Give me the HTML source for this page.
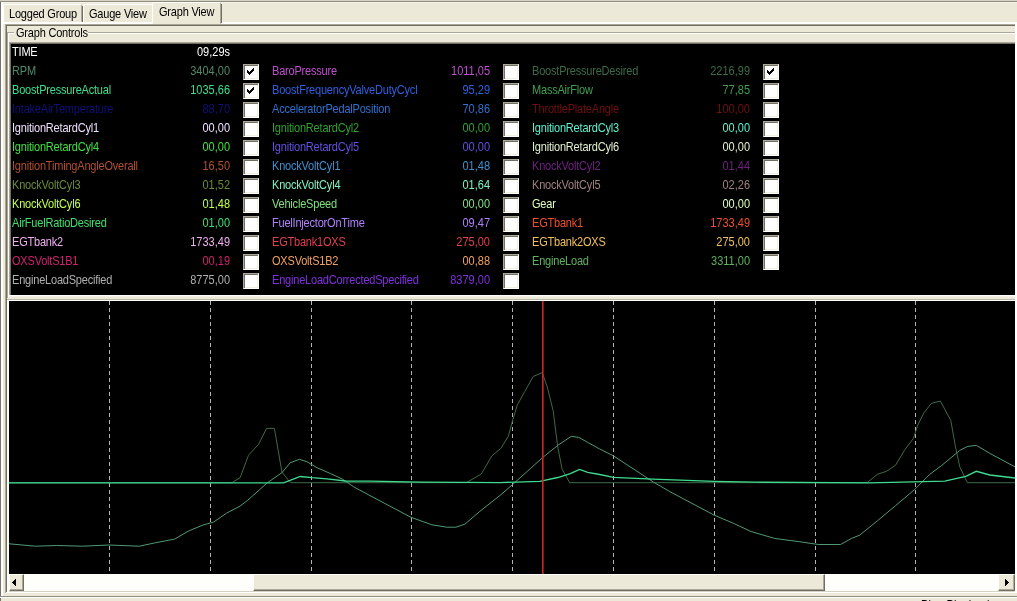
<!DOCTYPE html>
<html><head><meta charset="utf-8"><title>Graph View</title>
<style>
html,body{margin:0;padding:0}
body{width:1017px;height:601px;overflow:hidden;background:#ece9d8;position:relative;font-family:"Liberation Sans",sans-serif;font-size:11px;color:#000}
.a{position:absolute}
.t{position:absolute;white-space:nowrap;line-height:13px;height:13px;letter-spacing:-0.2px;transform:scaleY(1.13);transform-origin:0 10.3px;will-change:transform}
.v{position:absolute;white-space:nowrap;line-height:13px;height:13px;text-align:right;width:80px;letter-spacing:0;transform:scaleY(1.13);transform-origin:0 10.3px;will-change:transform}
.cb{position:absolute;width:14px;height:14px;background:#fff;border:1px solid;border-color:#aca899 #fff #fff #aca899;box-shadow:inset 1px 1px 0 #716f64, inset -1px -1px 0 #f1efe2}
.cb svg{position:absolute;left:3px;top:3px}
</style></head><body>

<div class="a" style="left:0;top:0;width:1017px;height:1px;background:#d6d3c4"></div>
<div class="a" style="left:0;top:1px;width:1017px;height:1px;background:#8f8c80"></div>
<div class="a" style="left:1px;top:2px;width:1016px;height:1px;background:#f6f4ea"></div>
<div class="a" style="left:0;top:2px;width:1px;height:599px;background:#77756a"></div>
<div class="a" style="left:1px;top:2px;width:2px;height:594px;background:#fff"></div>
<div class="a" style="left:3px;top:4px;width:79px;height:18px;border:1px solid;border-color:#fff #aca899 transparent #fff;box-sizing:border-box;border-radius:2px 2px 0 0"></div>
<div class="a" style="left:82px;top:6px;width:1px;height:16px;background:#716f64"></div>
<div class="a" style="left:83px;top:4px;width:71px;height:18px;border:1px solid;border-color:#fff #aca899 transparent #fff;box-sizing:border-box;border-radius:2px 2px 0 0"></div>
<div class="a" style="left:152px;top:2px;width:69px;height:22px;border:1px solid;border-color:#fff #aca899 transparent #fff;box-sizing:border-box;border-radius:2px 2px 0 0;background:#ece9d8"></div>
<div class="a" style="left:221px;top:4px;width:1px;height:19px;background:#716f64"></div>
<div class="a" style="left:3px;top:22px;width:149px;height:2px;background:#fff"></div>
<div class="a" style="left:222px;top:22px;width:795px;height:2px;background:#fff"></div>
<div class="t" style="left:9px;top:8px">Logged Group</div>
<div class="t" style="left:89px;top:8px">Gauge View</div>
<div class="t" style="left:159px;top:6px">Graph View</div>
<div class="a" style="left:5px;top:24px;width:1010px;height:1px;background:#aca899"></div>
<div class="a" style="left:6px;top:25px;width:1009px;height:1px;background:#716f64"></div>
<div class="a" style="left:5px;top:24px;width:1px;height:569px;background:#aca899"></div>
<div class="a" style="left:6px;top:25px;width:1px;height:568px;background:#716f64"></div>
<div class="a" style="left:1015px;top:24px;width:2px;height:569px;background:#fff"></div>
<div class="a" style="left:7px;top:32px;width:1008px;height:1px;background:#aca899"></div>
<div class="a" style="left:7px;top:33px;width:1008px;height:1px;background:#fff"></div>
<div class="a" style="left:7px;top:32px;width:1px;height:266px;background:#aca899"></div>
<div class="a" style="left:8px;top:33px;width:1px;height:265px;background:#fff"></div>
<div class="a" style="left:14px;top:30px;width:74px;height:6px;background:#ece9d8"></div><div class="t" style="left:16px;top:27px">Graph Controls</div>
<div class="a" style="left:9px;top:42px;width:1006px;height:253px;background:#000;border-top:1px solid #aca899;border-left:1px solid #aca899;box-sizing:border-box;box-shadow:inset 1px 1px 0 #716f64"></div>
<div class="a" style="left:9px;top:295px;width:1006px;height:1px;background:#fff"></div>
<div class="a" style="left:9px;top:296px;width:1006px;height:1px;background:#f4f2e6"></div>
<div class="a" style="left:7px;top:299px;width:1008px;height:1px;background:#bdbaa9"></div>
<div class="a" style="left:7px;top:300px;width:1008px;height:1px;background:#fff"></div>
<div class="t" style="left:12px;top:46px;color:#ffffff">TIME</div>
<div class="v" style="left:150px;top:46px;color:#ffffff">09,29s</div>
<div class="t" style="left:12px;top:65px;color:#52886a">RPM</div>
<div class="v" style="left:150px;top:65px;color:#52886a">3404,00</div>
<div class="cb" style="left:243px;top:64px"><svg width="7" height="7" viewBox="0 0 7 7" shape-rendering="crispEdges"><path d="M0 2h1v1h1v1h1v-1h1v-1h1v-1h1v-1h1v3h-1v1h-1v1h-1v1h-1v1h-1v-1h-1v-1h-1z" fill="#000"/></svg></div>
<div class="t" style="left:272px;top:65px;color:#c050d0">BaroPressure</div>
<div class="v" style="left:410px;top:65px;color:#c050d0">1011,05</div>
<div class="cb" style="left:503px;top:64px"></div>
<div class="t" style="left:532px;top:65px;color:#3f6b48">BoostPressureDesired</div>
<div class="v" style="left:670px;top:65px;color:#3f6b48">2216,99</div>
<div class="cb" style="left:763px;top:64px"><svg width="7" height="7" viewBox="0 0 7 7" shape-rendering="crispEdges"><path d="M0 2h1v1h1v1h1v-1h1v-1h1v-1h1v-1h1v3h-1v1h-1v1h-1v1h-1v1h-1v-1h-1v-1h-1z" fill="#000"/></svg></div>
<div class="t" style="left:12px;top:84px;color:#3ee08f">BoostPressureActual</div>
<div class="v" style="left:150px;top:84px;color:#3ee08f">1035,66</div>
<div class="cb" style="left:243px;top:83px"><svg width="7" height="7" viewBox="0 0 7 7" shape-rendering="crispEdges"><path d="M0 2h1v1h1v1h1v-1h1v-1h1v-1h1v-1h1v3h-1v1h-1v1h-1v1h-1v1h-1v-1h-1v-1h-1z" fill="#000"/></svg></div>
<div class="t" style="left:272px;top:84px;color:#3060e0">BoostFrequencyValveDutyCycl</div>
<div class="v" style="left:410px;top:84px;color:#3060e0">95,29</div>
<div class="cb" style="left:503px;top:83px"></div>
<div class="t" style="left:532px;top:84px;color:#40a050">MassAirFlow</div>
<div class="v" style="left:670px;top:84px;color:#40a050">77,85</div>
<div class="cb" style="left:763px;top:83px"></div>
<div class="t" style="left:12px;top:103px;color:#101078">IntakeAirTemperature</div>
<div class="v" style="left:150px;top:103px;color:#101078">88,70</div>
<div class="cb" style="left:243px;top:102px"></div>
<div class="t" style="left:272px;top:103px;color:#3070d0">AcceleratorPedalPosition</div>
<div class="v" style="left:410px;top:103px;color:#3070d0">70,86</div>
<div class="cb" style="left:503px;top:102px"></div>
<div class="t" style="left:532px;top:103px;color:#701010">ThrottlePlateAngle</div>
<div class="v" style="left:670px;top:103px;color:#701010">100,00</div>
<div class="cb" style="left:763px;top:102px"></div>
<div class="t" style="left:12px;top:122px;color:#f0e0ff">IgnitionRetardCyl1</div>
<div class="v" style="left:150px;top:122px;color:#f0e0ff">00,00</div>
<div class="cb" style="left:243px;top:121px"></div>
<div class="t" style="left:272px;top:122px;color:#30a030">IgnitionRetardCyl2</div>
<div class="v" style="left:410px;top:122px;color:#30a030">00,00</div>
<div class="cb" style="left:503px;top:121px"></div>
<div class="t" style="left:532px;top:122px;color:#60f0d0">IgnitionRetardCyl3</div>
<div class="v" style="left:670px;top:122px;color:#60f0d0">00,00</div>
<div class="cb" style="left:763px;top:121px"></div>
<div class="t" style="left:12px;top:141px;color:#40e040">IgnitionRetardCyl4</div>
<div class="v" style="left:150px;top:141px;color:#40e040">00,00</div>
<div class="cb" style="left:243px;top:140px"></div>
<div class="t" style="left:272px;top:141px;color:#6050e0">IgnitionRetardCyl5</div>
<div class="v" style="left:410px;top:141px;color:#6050e0">00,00</div>
<div class="cb" style="left:503px;top:140px"></div>
<div class="t" style="left:532px;top:141px;color:#e0f0d0">IgnitionRetardCyl6</div>
<div class="v" style="left:670px;top:141px;color:#e0f0d0">00,00</div>
<div class="cb" style="left:763px;top:140px"></div>
<div class="t" style="left:12px;top:160px;color:#b05030">IgnitionTimingAngleOverall</div>
<div class="v" style="left:150px;top:160px;color:#b05030">16,50</div>
<div class="cb" style="left:243px;top:159px"></div>
<div class="t" style="left:272px;top:160px;color:#4090d0">KnockVoltCyl1</div>
<div class="v" style="left:410px;top:160px;color:#4090d0">01,48</div>
<div class="cb" style="left:503px;top:159px"></div>
<div class="t" style="left:532px;top:160px;color:#702080">KnockVoltCyl2</div>
<div class="v" style="left:670px;top:160px;color:#702080">01,44</div>
<div class="cb" style="left:763px;top:159px"></div>
<div class="t" style="left:12px;top:179px;color:#6a8a3a">KnockVoltCyl3</div>
<div class="v" style="left:150px;top:179px;color:#6a8a3a">01,52</div>
<div class="cb" style="left:243px;top:178px"></div>
<div class="t" style="left:272px;top:179px;color:#80f0c0">KnockVoltCyl4</div>
<div class="v" style="left:410px;top:179px;color:#80f0c0">01,64</div>
<div class="cb" style="left:503px;top:178px"></div>
<div class="t" style="left:532px;top:179px;color:#a08080">KnockVoltCyl5</div>
<div class="v" style="left:670px;top:179px;color:#a08080">02,26</div>
<div class="cb" style="left:763px;top:178px"></div>
<div class="t" style="left:12px;top:198px;color:#c0ff50">KnockVoltCyl6</div>
<div class="v" style="left:150px;top:198px;color:#c0ff50">01,48</div>
<div class="cb" style="left:243px;top:197px"></div>
<div class="t" style="left:272px;top:198px;color:#80e080">VehicleSpeed</div>
<div class="v" style="left:410px;top:198px;color:#80e080">00,00</div>
<div class="cb" style="left:503px;top:197px"></div>
<div class="t" style="left:532px;top:198px;color:#e0ffc0">Gear</div>
<div class="v" style="left:670px;top:198px;color:#e0ffc0">00,00</div>
<div class="cb" style="left:763px;top:197px"></div>
<div class="t" style="left:12px;top:217px;color:#40e070">AirFuelRatioDesired</div>
<div class="v" style="left:150px;top:217px;color:#40e070">01,00</div>
<div class="cb" style="left:243px;top:216px"></div>
<div class="t" style="left:272px;top:217px;color:#b080ff">FuelInjectorOnTime</div>
<div class="v" style="left:410px;top:217px;color:#b080ff">09,47</div>
<div class="cb" style="left:503px;top:216px"></div>
<div class="t" style="left:532px;top:217px;color:#f05030">EGTbank1</div>
<div class="v" style="left:670px;top:217px;color:#f05030">1733,49</div>
<div class="cb" style="left:763px;top:216px"></div>
<div class="t" style="left:12px;top:236px;color:#f0b0f0">EGTbank2</div>
<div class="v" style="left:150px;top:236px;color:#f0b0f0">1733,49</div>
<div class="cb" style="left:243px;top:235px"></div>
<div class="t" style="left:272px;top:236px;color:#e04050">EGTbank1OXS</div>
<div class="v" style="left:410px;top:236px;color:#e04050">275,00</div>
<div class="cb" style="left:503px;top:235px"></div>
<div class="t" style="left:532px;top:236px;color:#f0c060">EGTbank2OXS</div>
<div class="v" style="left:670px;top:236px;color:#f0c060">275,00</div>
<div class="cb" style="left:763px;top:235px"></div>
<div class="t" style="left:12px;top:255px;color:#d02070">OXSVoltS1B1</div>
<div class="v" style="left:150px;top:255px;color:#d02070">00,19</div>
<div class="cb" style="left:243px;top:254px"></div>
<div class="t" style="left:272px;top:255px;color:#f0a060">OXSVoltS1B2</div>
<div class="v" style="left:410px;top:255px;color:#f0a060">00,88</div>
<div class="cb" style="left:503px;top:254px"></div>
<div class="t" style="left:532px;top:255px;color:#60b060">EngineLoad</div>
<div class="v" style="left:670px;top:255px;color:#60b060">3311,00</div>
<div class="cb" style="left:763px;top:254px"></div>
<div class="t" style="left:12px;top:274px;color:#b0b0b0">EngineLoadSpecified</div>
<div class="v" style="left:150px;top:274px;color:#b0b0b0">8775,00</div>
<div class="cb" style="left:243px;top:273px"></div>
<div class="t" style="left:272px;top:274px;color:#8030e0">EngineLoadCorrectedSpecified</div>
<div class="v" style="left:410px;top:274px;color:#8030e0">8379,00</div>
<div class="cb" style="left:503px;top:273px"></div>
<div class="cb" style="left:503px;top:273px"></div>
<div class="a" style="left:7px;top:300px;width:2px;height:293px;background:#fdfcf7"></div>
<div class="a" style="left:9px;top:301px;width:1006px;height:273px;background:#000"></div>
<svg class="a" style="left:0;top:0" width="1017" height="601" viewBox="0 0 1017 601">
<line x1="109.5" y1="301" x2="109.5" y2="572" stroke="#b4b4b4" stroke-width="1" stroke-dasharray="4 3" shape-rendering="crispEdges"/>
<line x1="210.5" y1="301" x2="210.5" y2="572" stroke="#b4b4b4" stroke-width="1" stroke-dasharray="4 3" shape-rendering="crispEdges"/>
<line x1="311.5" y1="301" x2="311.5" y2="572" stroke="#b4b4b4" stroke-width="1" stroke-dasharray="4 3" shape-rendering="crispEdges"/>
<line x1="411.5" y1="301" x2="411.5" y2="572" stroke="#b4b4b4" stroke-width="1" stroke-dasharray="4 3" shape-rendering="crispEdges"/>
<line x1="512.5" y1="301" x2="512.5" y2="572" stroke="#b4b4b4" stroke-width="1" stroke-dasharray="4 3" shape-rendering="crispEdges"/>
<line x1="613.5" y1="301" x2="613.5" y2="572" stroke="#b4b4b4" stroke-width="1" stroke-dasharray="4 3" shape-rendering="crispEdges"/>
<line x1="714.5" y1="301" x2="714.5" y2="572" stroke="#b4b4b4" stroke-width="1" stroke-dasharray="4 3" shape-rendering="crispEdges"/>
<line x1="815.5" y1="301" x2="815.5" y2="572" stroke="#b4b4b4" stroke-width="1" stroke-dasharray="4 3" shape-rendering="crispEdges"/>
<line x1="915.5" y1="301" x2="915.5" y2="572" stroke="#b4b4b4" stroke-width="1" stroke-dasharray="4 3" shape-rendering="crispEdges"/>
<polyline points="9.0,482.7 231.8,482.7 240.1,477.7 248.5,455.2 258.5,444.3 266.6,428.4 274.4,428.4 281.9,471.9 290.3,482.7 466.4,482.7 481.4,473.9 491.8,455.9 500.8,448.4 508.3,436.4 512.8,419.9 517.3,404.9 524.8,391.5 533.2,376.5 542.2,372.6 547.3,387.0 553.2,410.9 557.7,446.9 562.2,469.4 569.7,482.7 867.0,482.7 877.4,474.3 886.4,471.3 895.4,465.4 904.4,450.4 913.4,438.4 917.9,424.9 923.9,412.9 931.3,403.4 940.3,401.0 950.8,420.4 955.3,445.9 959.8,466.9 967.3,482.7 1015.0,482.7" fill="none" stroke="#3e6a48" stroke-width="1"/>
<polyline points="9.0,543.8 35.4,546.2 56.6,545.5 82.6,546.2 108.6,545.0 139.2,546.2 155.8,542.7 174.6,539.1 188.8,530.9 203.0,525.0 213.6,522.1 226.5,513.2 240.0,506.1 247.7,500.3 266.9,483.1 281.9,472.7 290.3,462.7 299.5,459.3 307.0,461.8 317.0,467.7 330.4,473.5 342.1,478.9 353.8,486.9 370.0,495.6 411.0,517.3 431.9,524.8 446.9,527.2 455.9,527.2 464.9,524.2 479.9,511.3 500.8,494.8 512.8,484.3 527.8,470.9 542.8,457.4 557.7,445.4 571.2,436.4 578.7,437.3 587.7,442.4 599.7,449.0 613.4,455.8 653.3,482.0 669.8,491.6 713.9,515.0 733.2,523.2 751.0,531.5 774.5,538.4 799.3,541.7 818.5,544.5 840.5,544.5 851.6,538.4 859.8,535.1 877.4,520.8 895.4,505.8 914.9,489.3 929.8,474.3 941.8,465.4 959.8,450.4 967.3,446.5 976.3,445.3 989.8,453.4 1015.0,466.9" fill="none" stroke="#4f9a74" stroke-width="1"/>
<polyline points="9.0,482.9 283.6,482.9 300.3,476.5 312.0,477.7 327.0,478.9 345.5,481.0 370.0,481.2 420.0,482.2 500.0,482.6 539.8,481.3 557.7,477.5 569.7,473.9 579.6,469.4 587.7,472.4 599.7,474.5 613.4,477.3 653.0,479.2 714.0,481.4 755.0,482.2 870.0,482.8 944.8,481.2 965.8,476.4 976.3,471.3 989.8,475.0 1015.0,478.0" fill="none" stroke="#3fdc8f" stroke-width="1.3"/>
<line x1="542.8" y1="301" x2="542.8" y2="574" stroke="#cc2626" stroke-width="1.6"/>
</svg>
<div class="a" style="left:9px;top:574px;width:1006px;height:17px;background:#fefefb"></div>
<div class="a" style="left:9px;top:574px;width:15px;height:17px;border:1px solid;border-color:#fff #716f64 #716f64 #fff;box-sizing:border-box;background:#ece9d8;box-shadow:inset -1px -1px 0 #aca899"><svg class="a" style="left:2px;top:4px" width="5" height="7" shape-rendering="crispEdges"><path d="M0 3h1v-1h1v-1h1v-1h1v7h-1v-1h-1v-1h-1v-1h-1z" fill="#000"/></svg></div>
<div class="a" style="left:998px;top:574px;width:17px;height:17px;border:1px solid;border-color:#fff #716f64 #716f64 #fff;box-sizing:border-box;background:#ece9d8;box-shadow:inset -1px -1px 0 #aca899"><svg class="a" style="left:6px;top:4px" width="5" height="7" shape-rendering="crispEdges"><path d="M4 3h-1v-1h-1v-1h-1v-1h-1v7h1v-1h1v-1h1v-1h1z" fill="#000"/></svg></div>
<div class="a" style="left:253px;top:574px;width:572px;height:17px;border:1px solid;border-color:#fff #716f64 #716f64 #fff;box-sizing:border-box;background:#ece9d8;box-shadow:inset -1px -1px 0 #aca899"></div>
<div class="a" style="left:9px;top:591px;width:1006px;height:1px;background:#d5d2c3"></div>
<div class="a" style="left:6px;top:592px;width:1009px;height:1px;background:#fff"></div>
<div class="a" style="left:0px;top:596px;width:1017px;height:1px;background:#8f8c80"></div>
<div class="a" style="left:0px;top:597px;width:1017px;height:1px;background:#fff"></div>
<div class="t" style="left:921px;top:599px;letter-spacing:0.2px">Play Playback</div>
</body></html>
